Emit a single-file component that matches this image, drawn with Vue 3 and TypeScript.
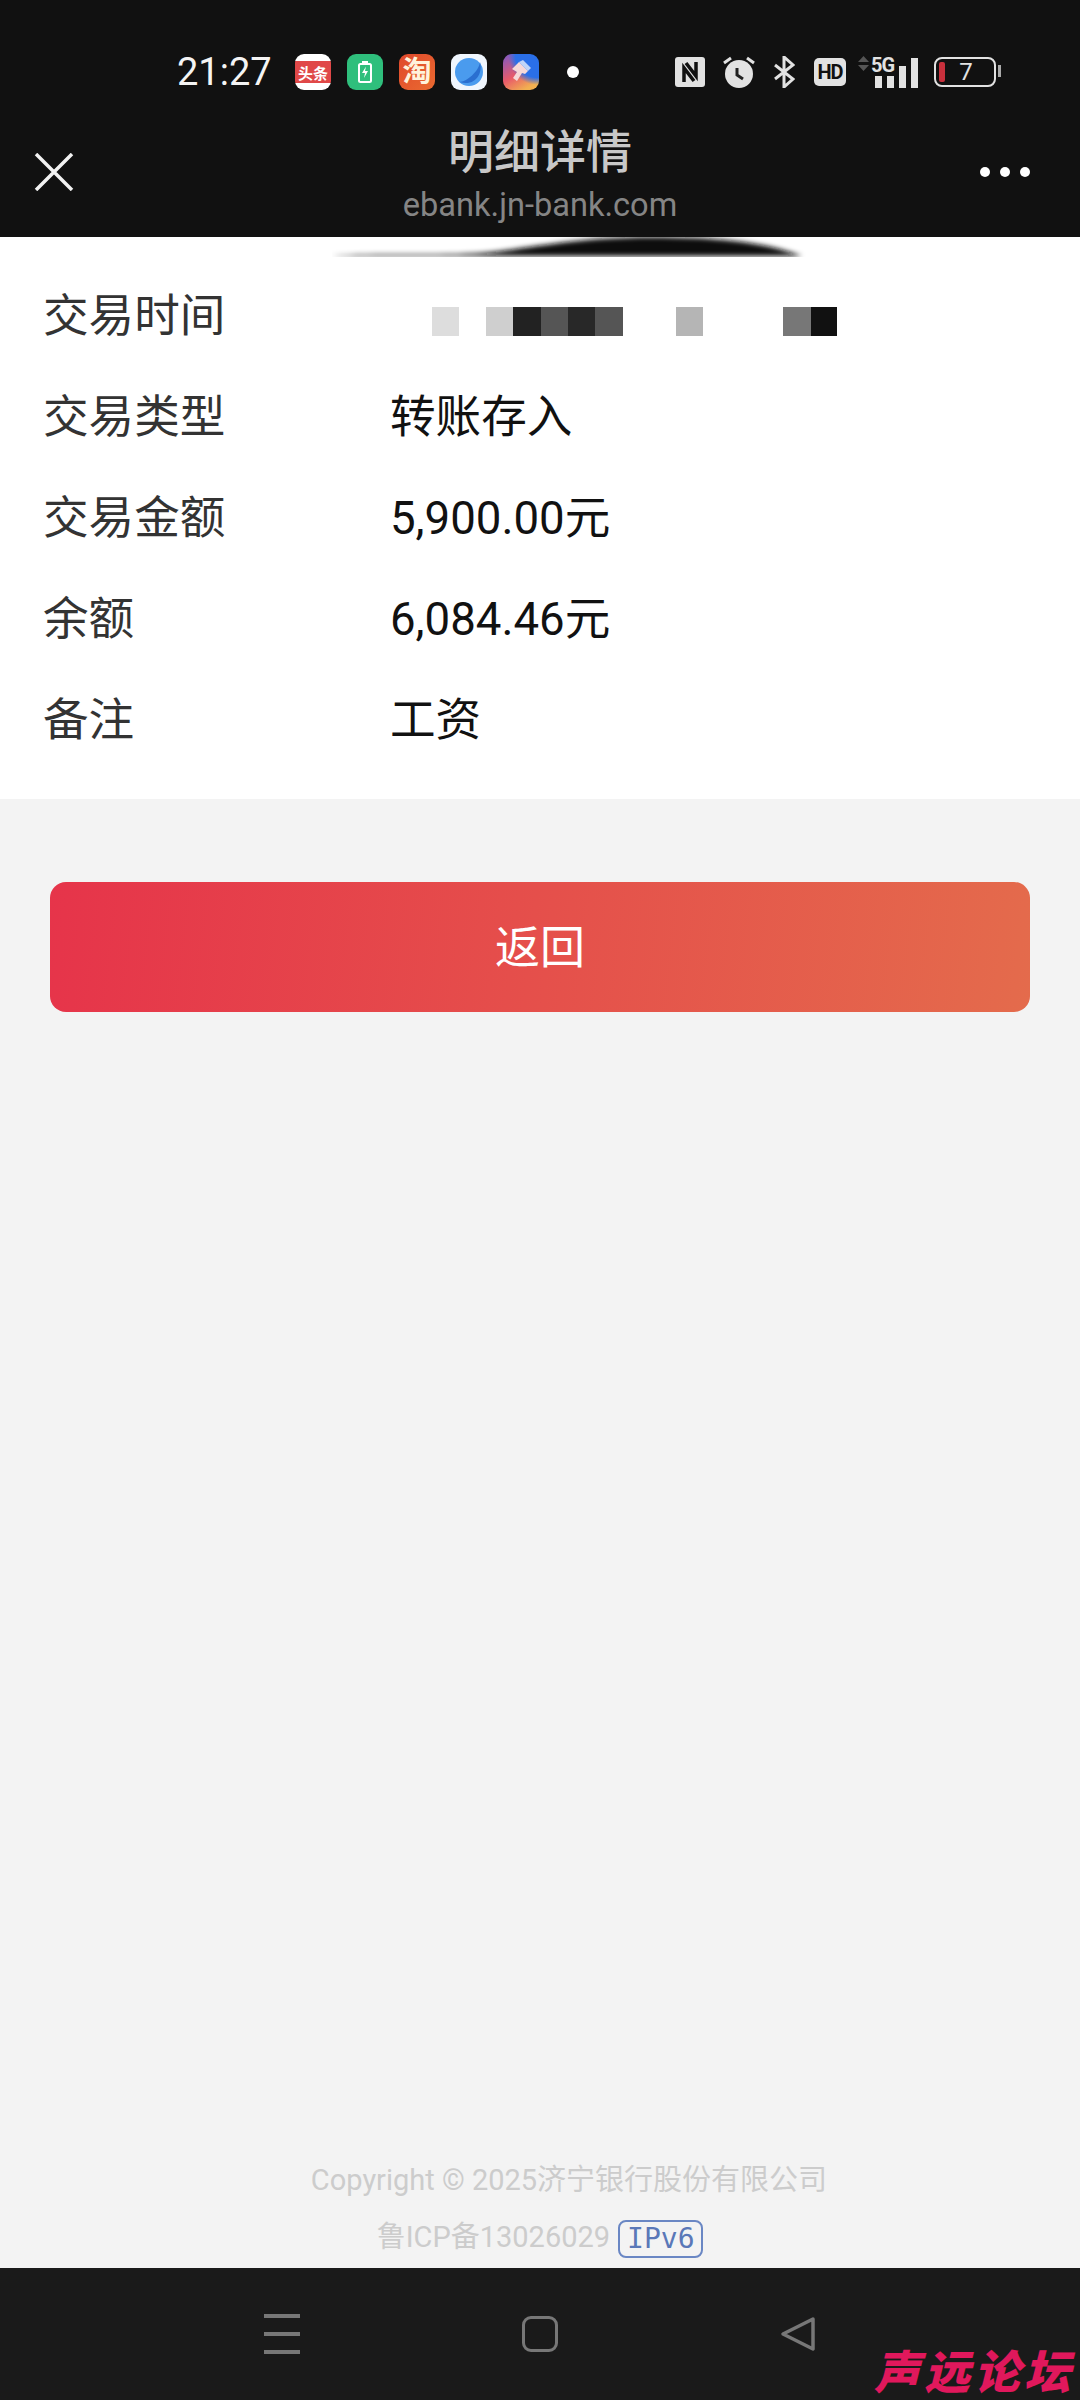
<script setup lang="ts">
interface Row {
  label: string;
  value: string;
}

const rows: Row[] = [
  { label: "交易类型", value: "转账存入" },
  { label: "交易金额", value: "5,900.00元" },
  { label: "余额", value: "6,084.46元" },
  { label: "备注", value: "工资" },
];

// mosaic over the transaction time
const mosaic = [
  { c: "#dddddd", w: 27, gap: 0 },
  { c: "#cfcfcf", w: 27, gap: 27 },
  { c: "#222222", w: 28, gap: 0 },
  { c: "#555555", w: 27, gap: 0 },
  { c: "#282828", w: 27, gap: 0 },
  { c: "#555555", w: 28, gap: 0 },
  { c: "#b5b5b5", w: 27, gap: 53 },
  { c: "#777777", w: 28, gap: 80 },
  { c: "#111111", w: 26, gap: 0 },
];
</script>

<template>
  <div class="page">
    <header class="top">
      <div class="status">
        <span class="time">21:27</span>
        <div class="apps">
          <span class="app toutiao"><b>头条</b></span>
          <span class="app green">
            <svg width="36" height="36" viewBox="0 0 36 36">
              <path d="M15 7h6v3h-6z" fill="#fff" />
              <rect x="12" y="10" width="12" height="18" rx="1.5" fill="none" stroke="#fff" stroke-width="2" />
              <path d="M19 12.5l-4 6.5h3l-1 5 4-7h-3z" fill="#fff" />
            </svg>
          </span>
          <span class="app taobao"><b>淘</b></span>
          <span class="app planet">
            <svg width="36" height="36" viewBox="0 0 36 36">
              <circle cx="18" cy="18" r="14" fill="#4a9bee" />
              <path d="M8 28c8 0 20-11 21-20 3 11-4 25-21 20z" fill="#2a6fd0" />
            </svg>
          </span>
          <span class="app pencil">
            <svg width="36" height="36" viewBox="0 0 36 36">
              <path d="M9 15l7-7 9 9-3 3-3-1-5 8-4-3 4-6z" fill="#f6d8d8" />
              <path d="M16 8l9 9 3-3-8-8z" fill="#fff" opacity=".7" />
            </svg>
          </span>
          <i class="dot"></i>
        </div>
        <div class="sys">
          <svg class="ic" width="30" height="30" viewBox="0 0 30 30">
            <rect width="30" height="30" rx="3" fill="#e2e2e2" />
            <path d="M9 25V11l10 13M11 6l10 13V5" fill="none" stroke="#111" stroke-width="3.5" />
          </svg>
          <svg class="ic alarm" width="32" height="34" viewBox="0 0 32 34">
            <circle cx="16" cy="19" r="14" fill="#e2e2e2" />
            <path d="M1 8l7-5M31 8l-7-5" stroke="#e2e2e2" stroke-width="3" />
            <path d="M14 13v7l6 4" fill="none" stroke="#222" stroke-width="3" />
          </svg>
          <svg class="ic bt" width="22" height="32" viewBox="0 0 22 32">
            <path d="M2 9l18 14-9 8V1l9 8L2 23" fill="none" stroke="#e2e2e2" stroke-width="3" />
          </svg>
          <span class="hd">HD</span>
          <div class="signal">
            <svg class="updown" width="11" height="15" viewBox="0 0 11 15">
              <path d="M5.5 0L11 6H0zM5.5 15L0 9h11z" fill="#555" />
            </svg>
            <span class="fiveg">5G</span>
            <i class="bar b1"></i><i class="bar b1"></i><i class="bar b2"></i><i class="bar b3"></i>
          </div>
          <div class="battery">
            <i class="level"></i>
            <span>7</span>
            <i class="tip"></i>
          </div>
        </div>
      </div>
      <div class="nav">
        <svg class="close" width="40" height="38" viewBox="0 0 40 38">
          <path d="M2 1l36 36M38 1L2 37" stroke="#f2f2f2" stroke-width="3.5" />
        </svg>
        <div class="heading">
          <div class="title">明细详情</div>
          <div class="host">ebank.jn-bank.com</div>
        </div>
        <div class="more"><i></i><i></i><i></i></div>
      </div>
    </header>

    <section class="detail">
      <svg class="smudge" width="480" height="20" viewBox="0 0 480 20">
        <defs>
          <filter id="soft"><feGaussianBlur stdDeviation="2.5" /></filter>
        </defs>
        <path d="M0 19c40-3 110 0 150-3 40-3 90-16 170-16s120 8 150 19z" fill="#111" filter="url(#soft)" />
      </svg>
      <div class="row">
        <span class="label">交易时间</span>
        <span class="pixels">
          <i
            v-for="(m, i) in mosaic"
            :key="i"
            :style="{ background: m.c, width: m.w + 'px', marginLeft: m.gap + 'px' }"
          ></i>
        </span>
      </div>
      <div v-for="row in rows" :key="row.label" class="row">
        <span class="label">{{ row.label }}</span>
        <span class="value">{{ row.value }}</span>
      </div>
    </section>

    <main class="body">
      <button class="back">返回</button>
      <footer class="foot">
        <p class="copy">Copyright © 2025济宁银行股份有限公司</p>
        <p class="icp">鲁ICP备13026029 <span class="ipv6">IPv6</span></p>
      </footer>
    </main>

    <nav class="keys">
      <div class="menu"><i></i><i></i><i></i></div>
      <i class="home"></i>
      <svg width="36" height="36" viewBox="0 0 36 36">
        <path d="M33 3L3 18l30 15z" fill="none" stroke="#777" stroke-width="3.5" stroke-linejoin="round" />
      </svg>
      <span class="mark">声远论坛</span>
    </nav>
  </div>
</template>

<style scoped>
.page {
  width: 1080px;
  height: 2400px;
  display: flex;
  flex-direction: column;
  position: relative;
  overflow: hidden;
  background: #f3f3f3;
  font-family: Roboto, "Noto Sans CJK SC", sans-serif;
}
i {
  display: block;
}
p {
  margin: 0;
}

.top {
  height: 237px;
  background: #111;
}
.status {
  height: 122px;
  padding: 22px 84px 0 177px;
  box-sizing: border-box;
  display: flex;
  align-items: center;
}
.time {
  color: #f4f4f4;
  font-size: 38px;
  width: 118px;
}
.apps {
  display: flex;
  align-items: center;
  gap: 16px;
}
.app {
  width: 36px;
  height: 36px;
  border-radius: 9px;
  overflow: hidden;
  display: flex;
  align-items: center;
  justify-content: center;
}
.toutiao {
  background: linear-gradient(#fff 0 7px, #e04848 7px 29px, #fff 29px);
  color: #fff;
  font-size: 15px;
}
.green {
  background: #2fbf7c;
}
.taobao {
  background: linear-gradient(135deg, #e0492c, #ea6a30);
  color: #fff3dc;
  font-size: 29px;
  line-height: 36px;
}
.planet {
  background: #f0f6fd;
}
.pencil {
  background: radial-gradient(circle at 95% 5%, #2a6fe8 0 45%, transparent 60%),
    linear-gradient(150deg, #7a5ac8, #e85a6a 50%, #f2b050 85%);
}
.dot {
  width: 12px;
  height: 12px;
  margin-left: 12px;
  border-radius: 50%;
  background: #fff;
}
.sys {
  display: flex;
  align-items: center;
  margin-left: auto;
}
.ic {
  flex: none;
  margin-right: 18px;
}
.bt {
  margin-right: 19px;
}
.hd {
  width: 32px;
  height: 28px;
  margin-right: 12px;
  border-radius: 5px;
  background: #e2e2e2;
  color: #111;
  font-size: 20px;
  font-weight: 700;
  line-height: 28px;
  text-align: center;
  letter-spacing: -1px;
}
.signal {
  position: relative;
  width: 60px;
  height: 32px;
  display: flex;
  align-items: flex-end;
  justify-content: flex-end;
  gap: 5px;
  margin-right: 16px;
}
.updown {
  position: absolute;
  left: 0;
  top: 0;
}
.fiveg {
  position: absolute;
  left: 13px;
  top: -3px;
  color: #e2e2e2;
  font-size: 20px;
  font-weight: 700;
  letter-spacing: -1px;
}
.bar {
  width: 7px;
  background: #e2e2e2;
}
.b1 {
  height: 12px;
}
.b2 {
  height: 22px;
}
.b3 {
  height: 30px;
}
.battery {
  position: relative;
  width: 62px;
  height: 30px;
  box-sizing: border-box;
  border: 2px solid #e2e2e2;
  border-radius: 8px;
  color: #e2e2e2;
  font-size: 24px;
  line-height: 26px;
  text-align: center;
}
.level {
  position: absolute;
  left: 3px;
  top: 3px;
  width: 6px;
  height: 20px;
  border-radius: 2px;
  background: #c8303c;
}
.tip {
  position: absolute;
  right: -7px;
  top: 6px;
  width: 3px;
  height: 12px;
  background: #aaa;
}
.battery span {
  padding-left: 2px;
}

.nav {
  height: 115px;
  display: grid;
  grid-template-columns: 200px 1fr 200px;
  align-items: center;
}
.close {
  margin: 0 0 15px 34px;
}
.heading {
  text-align: center;
  align-self: start;
}
.title {
  color: #c8c8c8;
  font-size: 46px;
  font-weight: 500;
  line-height: 60px;
}
.host {
  color: #858585;
  font-size: 32.6px;
  line-height: 46px;
}
.more {
  display: flex;
  justify-content: flex-end;
  gap: 10px;
  padding-right: 50px;
  margin-bottom: 15px;
}
.more i {
  width: 10px;
  height: 10px;
  border-radius: 50%;
  background: #fff;
}

.detail {
  position: relative;
  height: 562px;
  box-sizing: border-box;
  padding-top: 24px;
  background: #fff;
}
.smudge {
  position: absolute;
  left: 332px;
  top: 0;
}
.row {
  height: 101px;
  display: flex;
  align-items: center;
  padding-left: 43px;
  font-size: 45.6px;
}
.label {
  width: 347px;
  color: #333;
}
.value {
  color: #111;
}
.pixels {
  display: flex;
  height: 29px;
  margin: 20px 0 0 42px;
}
.pixels i {
  height: 100%;
}

.body {
  flex: 1;
  display: flex;
  flex-direction: column;
  padding: 83px 50px 0;
}
.back {
  height: 130px;
  padding-bottom: 6px;
  border: none;
  border-radius: 16px;
  background: linear-gradient(97deg, #e6344a, #e46b4c);
  color: #fff;
  font-family: inherit;
  font-size: 45px;
}
.foot {
  margin-top: auto;
  padding-bottom: 3px;
  text-align: center;
  color: #cccccc;
  font-size: 29px;
}
.copy {
  padding-left: 58px;
  line-height: 58px;
}
.icp {
  line-height: 56px;
}
.ipv6 {
  display: inline-block;
  height: 38px;
  width: 85px;
  box-sizing: border-box;
  margin-left: 1px;
  border: 2px solid #6a87c4;
  border-radius: 8px;
  color: #5a78b8;
  font-family: "DejaVu Sans Mono", monospace;
  font-size: 28px;
  line-height: 33px;
  vertical-align: middle;
}

.keys {
  position: relative;
  height: 132px;
  flex: none;
  display: grid;
  grid-template-columns: 36px 36px 36px;
  justify-content: center;
  column-gap: 222px;
  align-items: center;
  background: #1a1a1a;
}
.menu {
  display: flex;
  flex-direction: column;
  gap: 14px;
}
.menu i {
  height: 4px;
  background: #777;
}
.home {
  width: 36px;
  height: 36px;
  box-sizing: border-box;
  border: 3px solid #777;
  border-radius: 9px;
}
.mark {
  position: absolute;
  right: 6px;
  bottom: 4px;
  color: #e0185c;
  font-size: 46px;
  font-weight: 900;
  font-style: italic;
  letter-spacing: 4px;
  line-height: 46px;
}
</style>

<style>
body {
  margin: 0;
}
</style>
